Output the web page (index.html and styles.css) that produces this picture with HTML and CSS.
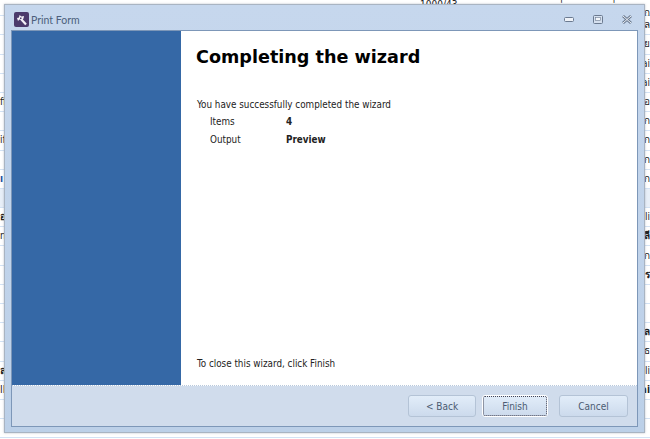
FILE: index.html
```html
<!DOCTYPE html>
<html lang="en">
<head>
    <meta charset="UTF-8">
    <meta name="viewport" content="width=device-width, initial-scale=1.0">
    <title>Print Form</title>
    <link rel="stylesheet" href="styles.css">
</head>
<body>

    <div class="backdrop">
        <div class="top-row"><span>1000/43</span><span>.</span><span>'</span><span>'</span></div>
        <div class="row row-first"><span></span><span>ก</span></div>
        <div class="row"><span></span><span>ล</span></div>
        <div class="row"><span></span><span>ย</span></div>
        <div class="row"><span></span><span>ai</span></div>
        <div class="row"><span></span><span>ai</span></div>
        <div class="row"><span>ff</span><span>อ</span></div>
        <div class="row"><span></span><span>ก</span></div>
        <div class="row"><span>if</span><span>ก</span></div>
        <div class="row"><span></span><span>ก</span></div>
        <div class="row"><span class="blue">ı</span><span>ก</span></div>
        <div class="row row-shaded"><span></span><span></span></div>
        <div class="row"><span><b>อ</b></span><span>li</span></div>
        <div class="row"><span>ni</span><span><b>ลี</b></span></div>
        <div class="row"><span></span><span>ก</span></div>
        <div class="row"><span></span><span><b>ร</b></span></div>
        <div class="row"></div>
        <div class="row"></div>
        <div class="row"><span></span><span><b>ล</b></span></div>
        <div class="row"><span></span><span>ธ</span></div>
        <div class="row"><span><b>ลา</b></span><span>li</span></div>
        <div class="row"><span>IL</span><span><b>ai</b></span></div>
        <div class="row"></div>
        <div class="row"></div>
    </div>

    <div class="window">
        <div class="titlebar">
            <svg class="app-icon" width="15" height="15" viewBox="0 0 15 15">
                <rect width="15" height="15" rx="2" fill="#4b3a6b"/>
                <path d="M7 7l5 5.5" stroke="#f4f2f8" stroke-width="2.2"/>
                <path d="M3 6l2-.5L5.500 3l2 1.500L10 4 9.500 6.500 8 8 5.500 7.500 4 9z" fill="#f4f2f8"/>
                <path d="M6 5.500h1.500V7H6z" fill="#4b3a6b"/>
            </svg>
            <span class="title">Print Form</span>
            <div class="controls">
                <svg width="10" height="5" viewBox="0 0 10 5"><rect x="0.5" y="0.5" width="9" height="4" rx="1" fill="#eef2f8" stroke="#6b7a90"/></svg>
                <svg width="10" height="9" viewBox="0 0 10 9"><rect x="0.5" y="0.5" width="9" height="8" rx="1" fill="#d5e0ef" stroke="#6b7a90"/><rect x="2.5" y="2.5" width="5" height="3" fill="#f4f7fb" stroke="#6b7a90" stroke-width="0.6"/></svg>
                <svg width="10" height="9" viewBox="0 0 10 9"><path d="M1 1l8 7M9 1L1 8" stroke="#6b7a90" stroke-width="2.8"/><path d="M1 1l8 7M9 1L1 8" stroke="#eef2f8" stroke-width="1"/></svg>
            </div>
        </div>
        <div class="client">
            <div class="main">
                <div class="sidebar"></div>
                <div class="content">
                    <h1>Completing the wizard</h1>
                    <p class="intro">You have successfully completed the wizard</p>
                    <div class="summary">
                        <div class="summary-row"><span class="label">Items</span><b>4</b></div>
                        <div class="summary-row"><span class="label">Output</span><b>Preview</b></div>
                    </div>
                    <p class="closing">To close this wizard, click Finish</p>
                </div>
            </div>
            <div class="footer">
                <button>&lt; Back</button>
                <button class="default">Finish</button>
                <button class="cancel">Cancel</button>
            </div>
        </div>
    </div>

</body>
</html>
```

FILE: styles.css
```css
html, body {
    margin: 0;
    height: 100%;
    overflow: hidden;
}
body {
    position: relative;
    background-color: #fff;
    font-family: "DejaVu Sans", "Noto Sans CJK SC", sans-serif;
    font-stretch: condensed;
    font-size: 10px;
    color: #222;
}
.backdrop {
    height: 439px;
    overflow: hidden;
}
.top-row {
    height: 10px;
    display: flex;
    gap: 50px;
    padding-left: 420px;
    line-height: 10px;
}
.row {
    box-sizing: border-box;
    height: 19.2px;
    display: flex;
    justify-content: space-between;
    align-items: center;
    border-bottom: 1px solid #d3e2f4;
    line-height: 14px;
}
.row-first {
    height: 6.2px;
    line-height: 6px;
}
.row-shaded {
    background: #e8eff8;
}
.blue {
    color: #1b4fa0;
    font-weight: bold;
}
.window {
    position: absolute;
    left: 4px;
    top: 4px;
    width: 641px;
    height: 429px;
    box-sizing: border-box;
    padding: 0 6px 5px 6px;
    display: flex;
    flex-direction: column;
    background: linear-gradient(#c6d7ed, #bcd0e8);
    border: 1px solid #a9b4c2;
    box-shadow: 0 0 2px rgba(120,130,150,0.5);
}
.titlebar {
    height: 25px;
    flex: none;
    box-sizing: border-box;
    display: flex;
    align-items: center;
    padding: 4px 0 0 3px;
}
.app-icon {
    margin-right: 2px;
}
.title {
    font-family: Lato, sans-serif;
    font-size: 10.5px;
    color: #4c5f7c;
}
.controls {
    margin-left: auto;
    display: flex;
    align-items: center;
    gap: 19px;
    padding-right: 6px;
}
.client {
    flex: 1;
    display: flex;
    flex-direction: column;
    border: 1px solid #7d97b8;
    background: #fff;
}
.main {
    flex: 1;
    display: flex;
    border-bottom: 1px dotted #b9c9dc;
}
.sidebar {
    width: 169px;
    background: #3568a6;
}
.content {
    flex: 1;
    display: flex;
    flex-direction: column;
    padding: 14px 0 15px 16px;
    font-size: 9.8px;
}
h1 {
    margin: 0 0 0 -1px;
    font-size: 17.6px;
    font-stretch: normal;
    line-height: 24px;
    color: #000;
}
.intro {
    margin: 29px 0 1px;
    line-height: 13px;
}
.summary {
    margin-left: 13px;
}
.summary-row {
    display: flex;
    height: 18px;
    align-items: center;
}
.label {
    width: 76px;
}
.closing {
    margin: auto 0 0;
    line-height: 13px;
}
.footer {
    height: 40px;
    flex: none;
    box-sizing: border-box;
    display: flex;
    justify-content: flex-end;
    align-items: center;
    padding-right: 9px;
    background: #d0dcec;
}
button {
    width: 68px;
    height: 22px;
    margin-left: 6px;
    padding: 0;
    font-family: "DejaVu Sans", sans-serif;
    font-stretch: condensed;
    font-size: 10px;
    color: #4b5b72;
    border: 1px solid #b4c3d6;
    border-radius: 3px;
    background: linear-gradient(#e2edf9, #ccdaec);
}
.default {
    width: 66px;
    border: 1px solid #fff;
    outline: 1px dotted #445;
    outline-offset: -2px;
}
.cancel {
    width: 69px;
    margin-left: 11px;
}
```
